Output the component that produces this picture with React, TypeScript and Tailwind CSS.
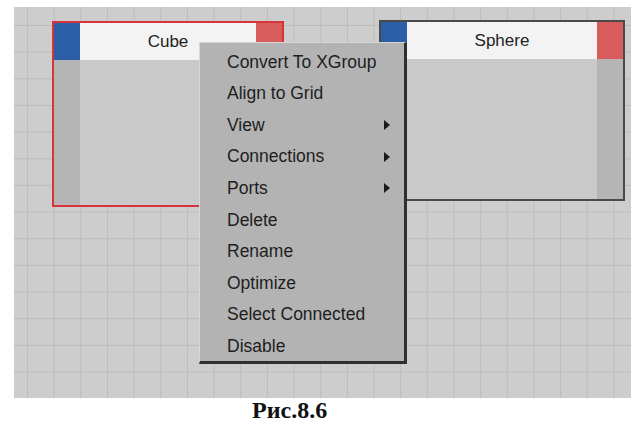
import React from 'react';

type Item = { label: string; sub?: boolean };

const items: Item[] = [
  { label: 'Convert To XGroup' },
  { label: 'Align to Grid' },
  { label: 'View', sub: true },
  { label: 'Connections', sub: true },
  { label: 'Ports', sub: true },
  { label: 'Delete' },
  { label: 'Rename' },
  { label: 'Optimize' },
  { label: 'Select Connected' },
  { label: 'Disable' },
];

const Node: React.FC<{ title: string; className: string }> = ({ title, className }) => (
  <div className={`absolute flex flex-col bg-[#c9c9c9] ${className}`}>
    {/* header: input port, title, output port */}
    <div className="flex h-[37px]">
      <div className="w-[26px] bg-[#2b5ea6]" />
      <div className="flex flex-1 items-center justify-center bg-[#f3f3f3] text-[17px] text-[#222]">
        {title}
      </div>
      <div className="w-[26px] bg-[#d95c5c]" />
    </div>
    <div className="flex flex-1">
      <div className="w-[26px] bg-[#b5b5b5]" />
      <div className="flex-1" />
      <div className="w-[26px] bg-[#b5b5b5]" />
    </div>
  </div>
);

const App: React.FC = () => {
  return (
    <div className="w-[631px] h-[422px] bg-white overflow-hidden font-['Liberation_Sans',Arial,sans-serif]">
      <div className="pl-[14px] pt-[7px]">
        {/* Canvas */}
        <div className="relative w-[617px] h-[391px] bg-[#cdcdcd] bg-[image:linear-gradient(to_right,#bcbcbc_1px,transparent_1px),linear-gradient(to_bottom,#bcbcbc_1px,transparent_1px)] bg-[size:26.67px_26.67px] bg-[position:13px_18px]">
          <Node title="Cube" className="left-[38px] top-[14px] w-[232px] h-[186px] border-2 border-[#d8333a]" />
          <Node title="Sphere" className="left-[365px] top-[13px] w-[246px] h-[181px] border-2 border-[#4a4a4a]" />

          {/* Context menu */}
          <div className="absolute left-[185px] top-[35px] w-[208px] h-[322px] bg-[#b3b3b3] border-t border-l border-t-[#d6d6d6] border-l-[#d6d6d6] border-r-[3px] border-b-[3px] border-r-[#2f2f2f] border-b-[#2f2f2f] pt-[3px]">
            {items.map((it) => (
              <div key={it.label} className="flex h-[31.6px] items-center pl-[27px] pr-[14px] text-[17.5px] text-[#1e1e1e]">
                <span className="flex-1">{it.label}</span>
                {it.sub && (
                  <span className="w-0 h-0 border-y-[5px] border-y-transparent border-l-[6px] border-l-[#1a1a1a]" />
                )}
              </div>
            ))}
          </div>
        </div>

        {/* Caption */}
        <div className="pl-[238px] font-['Liberation_Serif','Times_New_Roman',serif] font-bold text-[24px] leading-[24px] text-[#111]">
          Рис.8.6
        </div>
      </div>
    </div>
  );
};

export default App;
